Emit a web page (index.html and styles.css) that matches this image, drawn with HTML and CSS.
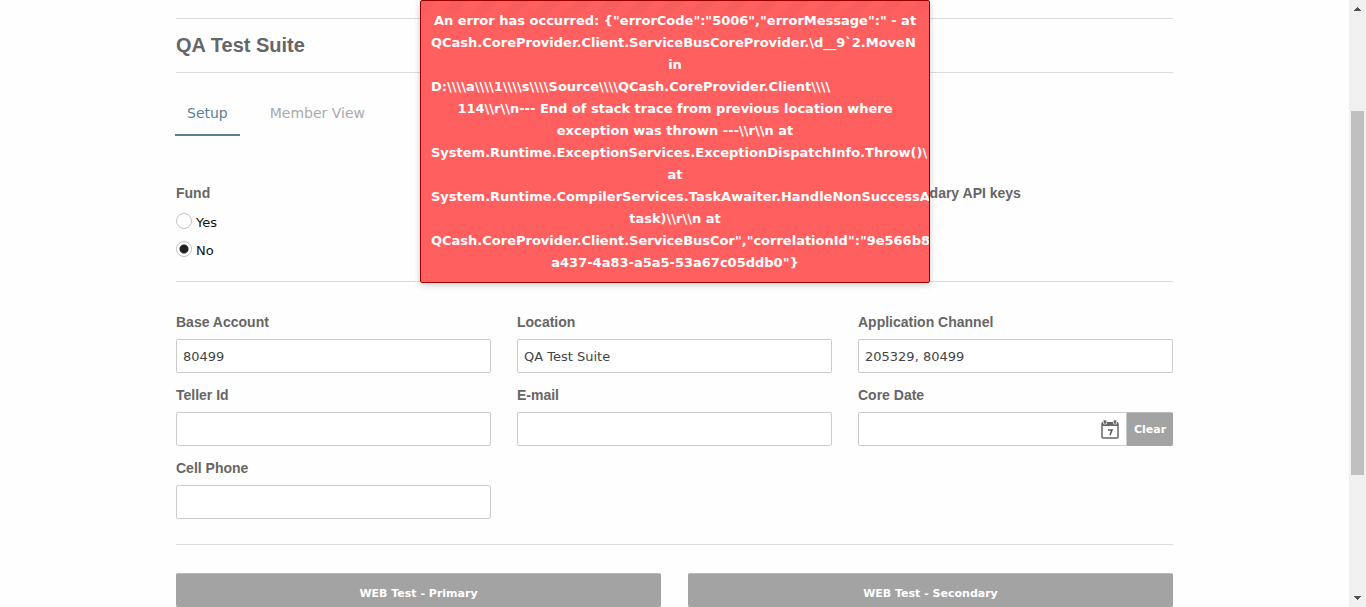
FILE: index.html
```html
<!DOCTYPE html>
<html lang="en">
<head>
<meta charset="utf-8">
<title>QA Test Suite</title>
<link rel="stylesheet" href="styles.css">
</head>
<body>
<div class="viewport">
  <main class="page">
    <header class="page-header"><h1 class="title">QA Test Suite</h1></header>
    <nav class="tabs">
      <a class="tab tab-active" href="#setup">Setup</a>
      <a class="tab" href="#member">Member View</a>
    </nav>
    <form class="form">
      <section class="options">
        <fieldset class="radios">
          <legend class="label">Fund</legend>
          <label class="radio-row"><input class="radio" type="radio" name="fund"><span class="radio-text">Yes</span></label>
          <label class="radio-row"><input class="radio" type="radio" name="fund" checked><span class="radio-text">No</span></label>
        </fieldset>
        <div class="label api-label">Use Secondary API keys</div>
      </section>
      <section class="fields">
        <div class="field"><label class="label" for="base">Base Account</label><input class="input" id="base" type="text" value="80499"></div>
        <div class="field"><label class="label" for="location">Location</label><input class="input" id="location" type="text" value="QA Test Suite"></div>
        <div class="field"><label class="label" for="channel">Application Channel</label><input class="input" id="channel" type="text" value="205329, 80499"></div>
        <div class="field"><label class="label" for="teller">Teller Id</label><input class="input" id="teller" type="text"></div>
        <div class="field"><label class="label" for="email">E-mail</label><input class="input" id="email" type="text"></div>
        <div class="field">
          <label class="label" for="date">Core Date</label>
          <div class="date-row">
            <div class="date-box">
              <input class="date-input" id="date" type="text">
              <button class="calendar" type="button" aria-label="Choose date">
                <svg width="18" height="19" viewBox="0 0 18 19">
                  <rect x="1" y="3" width="16" height="15" rx="1" fill="#fff" stroke="#666" stroke-width="1.500"/>
                  <path d="M1 2h16v4H1z" fill="#666"/>
                  <path d="M2.500 0h3v4h-3zM12.500 0h3v4h-3z" fill="#666" stroke="#ccc" stroke-width="1"/>
                  <path d="M7 10h4l-2 5" fill="none" stroke="#555" stroke-width="1.500"/>
                </svg>
              </button>
            </div>
            <button class="button clear" type="button">Clear</button>
          </div>
        </div>
        <div class="field"><label class="label" for="phone">Cell Phone</label><input class="input" id="phone" type="text"></div>
      </section>
      <section class="actions">
        <button class="button action" type="button">WEB Test - Primary</button>
        <button class="button action" type="button">WEB Test - Secondary</button>
      </section>
    </form>
  </main>
  <aside class="scrollbar">
    <svg class="arrow" width="7" height="4" viewBox="0 0 7 4"><path d="M3 0h1v1h1v1h1v1h1v1H0V3h1V2h1V1h1z" fill="#505050"/></svg>
    <div class="track"><div class="thumb"></div></div>
    <svg class="arrow" width="7" height="4" viewBox="0 0 7 4"><path d="M0 0h7v1H6v1H5v1H4v1H3V3H2V2H1V1H0z" fill="#505050"/></svg>
  </aside>
</div>
<div class="alert" role="alert">An error has occurred: {"errorCode":"5006","errorMessage":" - at
<span class="long">QCash.CoreProvider.Client.ServiceBusCoreProvider.\d__9`2.MoveN</span>
in
<span class="long">D:\\\\a\\\\1\\\\s\\\\Source\\\\QCash.CoreProvider.Client\\\\</span>
114\\r\\n--- End of stack trace from previous location where<br>
exception was thrown ---\\r\\n at
<span class="long">System.Runtime.ExceptionServices.ExceptionDispatchInfo.Throw()\</span>
at
<span class="long">System.Runtime.CompilerServices.TaskAwaiter.HandleNonSuccessA</span>
task)\\r\\n at
<span class="long">QCash.CoreProvider.Client.ServiceBusCor","correlationId":"9e566b8</span>
a437-4a83-a5a5-53a67c05ddb0"}</div>
</body>
</html>
```
FILE: styles.css
```css
* { box-sizing: border-box; }
body {
  margin: 0;
  overflow: hidden;
  background: #fefefe;
  color: #222;
  font: 13px/22px Verdana, "DejaVu Sans", sans-serif;
}
.viewport { display: flex; height: 100vh; overflow: hidden; }
.page { flex: 1; max-width: 997px; margin: 18px auto 0; }
.page-header { padding: 15px 0 16px; border: solid #dcdcdc; border-width: 1px 0; }
.title { margin: 0; color: #666; font: bold 20px/22px "Liberation Sans", Arial, sans-serif; }
.tabs { display: flex; gap: 18px; margin-top: 18px; margin-left: -1px; }
.tab {
  padding: 11px 12px 10px;
  border-bottom: 2px solid transparent;
  color: #aaa;
  font-size: 14px;
  text-decoration: none;
}
.tab-active { border-color: #5b7f95; color: #5b7f95; }
.form { margin-top: 48px; }
.label {
  display: block;
  padding: 0;
  color: #666;
  font: bold 14px/18px "Liberation Sans", Arial, sans-serif;
}
.options, .fields {
  display: grid;
  grid-template-columns: repeat(3, 1fr);
  column-gap: 26px;
  border-bottom: 1px solid #dcdcdc;
}
.options { padding-bottom: 18px; }
.radios { margin: 0; padding: 0; border: 0; }
.radio-row { display: flex; align-items: center; gap: 4px; height: 28px; color: #111; }
.radio-text { padding-top: 3px; }
.radios .label { margin-bottom: 5px; }
.radio {
  appearance: none;
  width: 16px;
  height: 16px;
  margin: 0;
  border: 1px solid #c4c4c4;
  border-radius: 50%;
  background: #fff;
}
.radio:checked { background: radial-gradient(circle, #222 4px, #fff 5px); }
.api-label { grid-column: 3; }
.fields { row-gap: 13px; padding: 31px 0 25px; }
.field { display: flex; flex-direction: column; gap: 8px; }
.input, .date-box {
  width: 100%;
  height: 34px;
  border: 1px solid #ccc;
  border-radius: 2px;
  background: #fff;
}
.input { padding: 0 6px; color: #444; font: inherit; }
.date-row { display: flex; }
.date-box { display: flex; align-items: center; flex: 1; padding-right: 7px; border-radius: 2px 0 0 2px; }
.date-input { flex: 1; min-width: 0; padding: 0 6px; border: 0; background: transparent; font: inherit; }
.calendar { display: flex; padding: 0; border: 0; background: none; }
.button {
  border: 1px solid #a3a3a3;
  border-top-color: #b8b8b8;
  border-radius: 2px;
  background: #a3a3a3;
  color: #fff;
  font: bold 11px/16px Verdana, "DejaVu Sans", sans-serif;
}
.clear { width: 46px; padding: 2px 0 0; border-radius: 0 2px 2px 0; }
.actions { display: grid; grid-template-columns: 1fr 1fr; gap: 27px; padding-top: 28px; }
.action { height: 34px; padding: 7px 0 0; }
.scrollbar {
  display: flex;
  flex-direction: column;
  align-items: center;
  width: 17px;
  padding: 7px 0;
  background: #f0f0f0;
}
.arrow { flex: none; }
.track { display: flex; flex: 1; flex-direction: column; width: 13px; padding-top: 100px; }
.thumb { height: 75%; background: #c0c0c0; }
.alert {
  position: absolute;
  top: 0;
  left: calc(50% - 263px);
  width: 510px;
  padding: 9px 10px 8px;
  overflow: hidden;
  border: 1px solid #900;
  border-radius: 2px;
  background: linear-gradient(to bottom, transparent, #ff5f5f 32px), repeating-linear-gradient(135deg, #f65d5d 0 11px, #ff5f5f 11px 22px);
  box-shadow: 0 2px 6px rgba(0, 0, 0, 0.2);
  color: #fff;
  font-weight: bold;
  text-align: center;
}
.long { display: block; text-align: left; white-space: nowrap; }
```
